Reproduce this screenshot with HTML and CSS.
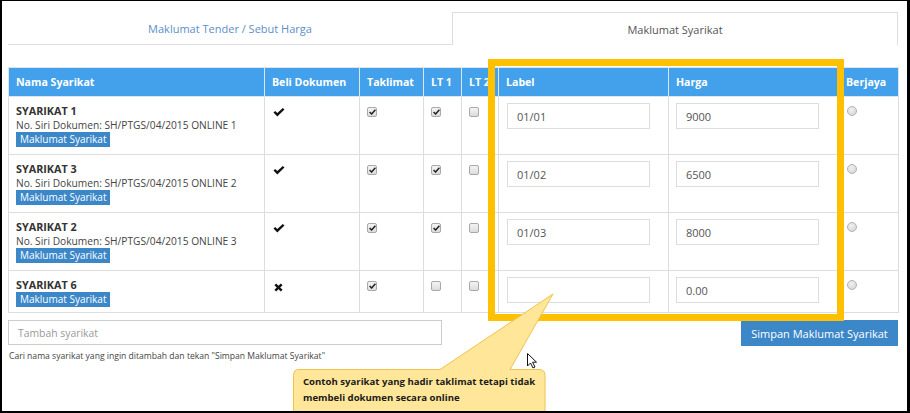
FILE: index.html
```html
<!DOCTYPE html>
<html>
<head>
<meta charset="utf-8">
<link rel="stylesheet" href="styles.css">
</head>
<body>
<div class="frame">
  <div class="tabs">
    <div class="tab">Maklumat Tender / Sebut Harga</div>
    <div class="tab active">Maklumat Syarikat</div>
  </div>
  <table class="grid">
    <colgroup>
      <col class="c-name"><col class="c-beli"><col class="c-tak"><col class="c-lt1"><col class="c-lt2"><col class="c-label"><col class="c-harga"><col class="c-berjaya">
    </colgroup>
    <thead>
      <tr><th>Nama Syarikat</th><th>Beli Dokumen</th><th>Taklimat</th><th>LT 1</th><th>LT 2</th><th>Label</th><th>Harga</th><th>Berjaya</th></tr>
    </thead>
    <tbody>
      <tr class="row">
        <td><div class="name">SYARIKAT 1</div><div class="doc">No. Siri Dokumen: SH/PTGS/04/2015 ONLINE 1</div><div class="badge-line"><span class="badge">Maklumat Syarikat</span></div></td>
        <td><svg class="ok" width="12" height="9" viewBox="0 0 12 9"><path d="M0.5 4.6 L2.2 3 L4.3 5 L9.8 0 L11.5 1.6 L4.3 8.4 Z" fill="#111"/></svg></td>
        <td><span class="cb on"><svg width="7" height="6" viewBox="0 0 7 6"><path d="M0.6 3 L2.6 5 L6.4 0.8" fill="none" stroke="#222" stroke-width="1.5"/></svg></span></td>
        <td><span class="cb on"><svg width="7" height="6" viewBox="0 0 7 6"><path d="M0.6 3 L2.6 5 L6.4 0.8" fill="none" stroke="#222" stroke-width="1.5"/></svg></span></td>
        <td><span class="cb"></span></td>
        <td><input class="field" value="01/01"></td>
        <td><input class="field" value="9000"></td>
        <td><span class="radio"></span></td>
      </tr>
      <tr class="row">
        <td><div class="name">SYARIKAT 3</div><div class="doc">No. Siri Dokumen: SH/PTGS/04/2015 ONLINE 2</div><div class="badge-line"><span class="badge">Maklumat Syarikat</span></div></td>
        <td><svg class="ok" width="12" height="9" viewBox="0 0 12 9"><path d="M0.5 4.6 L2.2 3 L4.3 5 L9.8 0 L11.5 1.6 L4.3 8.4 Z" fill="#111"/></svg></td>
        <td><span class="cb on"><svg width="7" height="6" viewBox="0 0 7 6"><path d="M0.6 3 L2.6 5 L6.4 0.8" fill="none" stroke="#222" stroke-width="1.5"/></svg></span></td>
        <td><span class="cb on"><svg width="7" height="6" viewBox="0 0 7 6"><path d="M0.6 3 L2.6 5 L6.4 0.8" fill="none" stroke="#222" stroke-width="1.5"/></svg></span></td>
        <td><span class="cb"></span></td>
        <td><input class="field" value="01/02"></td>
        <td><input class="field" value="6500"></td>
        <td><span class="radio"></span></td>
      </tr>
      <tr class="row">
        <td><div class="name">SYARIKAT 2</div><div class="doc">No. Siri Dokumen: SH/PTGS/04/2015 ONLINE 3</div><div class="badge-line"><span class="badge">Maklumat Syarikat</span></div></td>
        <td><svg class="ok" width="12" height="9" viewBox="0 0 12 9"><path d="M0.5 4.6 L2.2 3 L4.3 5 L9.8 0 L11.5 1.6 L4.3 8.4 Z" fill="#111"/></svg></td>
        <td><span class="cb on"><svg width="7" height="6" viewBox="0 0 7 6"><path d="M0.6 3 L2.6 5 L6.4 0.8" fill="none" stroke="#222" stroke-width="1.5"/></svg></span></td>
        <td><span class="cb on"><svg width="7" height="6" viewBox="0 0 7 6"><path d="M0.6 3 L2.6 5 L6.4 0.8" fill="none" stroke="#222" stroke-width="1.5"/></svg></span></td>
        <td><span class="cb"></span></td>
        <td><input class="field" value="01/03"></td>
        <td><input class="field" value="8000"></td>
        <td><span class="radio"></span></td>
      </tr>
      <tr class="row short">
        <td><div class="name">SYARIKAT 6</div><div class="badge-line"><span class="badge">Maklumat Syarikat</span></div></td>
        <td><svg class="no" width="9" height="9" viewBox="0 0 9 9"><path d="M1.3 1.3 L7.7 7.7 M7.7 1.3 L1.3 7.7" stroke="#111" stroke-width="2.4"/></svg></td>
        <td><span class="cb on"><svg width="7" height="6" viewBox="0 0 7 6"><path d="M0.6 3 L2.6 5 L6.4 0.8" fill="none" stroke="#222" stroke-width="1.5"/></svg></span></td>
        <td><span class="cb"></span></td>
        <td><span class="cb"></span></td>
        <td><input class="field" value=""></td>
        <td><input class="field" value="0.00"></td>
        <td><span class="radio"></span></td>
      </tr>
    </tbody>
  </table>
  <div class="actions">
    <div class="add-col">
      <input class="add" placeholder="Tambah syarikat">
      <p class="help">Cari nama syarikat yang ingin ditambah dan tekan "Simpan Maklumat Syarikat"</p>
    </div>
    <button class="save">Simpan Maklumat Syarikat</button>
  </div>
  <div class="overlay">
    <div class="highlight"></div>
    <svg class="callout" width="910" height="413" viewBox="0 0 910 413">
      <path d="M299 369.5 L440 369.5 L553 294 L510 369.5 L539 369.5 Q545 369.5 545 375.5 L545 440 L293.5 440 L293.5 375.5 Q293.5 369.5 299 369.5 Z" fill="#ffe699" stroke="#f1c24e" stroke-width="1"/>
      <path d="M527.5 353.5 L527.5 366 L530.5 363 L533 368 L535 367 L532.6 362.2 L536.5 362.2 Z" fill="#fff" stroke="#111" stroke-width="1" stroke-linejoin="round"/>
    </svg>
    <div class="callout-text">Contoh syarikat yang hadir taklimat tetapi tidak membeli dokumen secara online</div>
  </div>
</div>
</body>
</html>
```
FILE: styles.css
```css
* { box-sizing: border-box; }
body { margin: 0; font-family: "Open Sans", "DejaVu Sans", sans-serif; background: #fff; }

.frame {
  position: relative;
  width: 910px;
  height: 413px;
  border-style: solid;
  border-color: #000;
  border-width: 1px 3px 2px 2px;
  padding: 11px 9px 0 6px;
  overflow: hidden;
  background: #fff;
}

.tabs { display: flex; height: 33px; }
.tab {
  flex: 1;
  display: flex;
  align-items: center;
  justify-content: center;
  font-size: 11px;
  color: #5b8fc9;
  border-bottom: 1px solid #ddd;
  padding-top: 1px;
}
.tab.active { color: #555; border: 1px solid #ddd; border-bottom: none; }

.grid {
  margin-top: 22px;
  width: 890px;
  table-layout: fixed;
  border-collapse: collapse;
}
.c-name { width: 256px; }
.c-beli { width: 95px; }
.c-tak { width: 64px; }
.c-lt1 { width: 38px; }
.c-lt2 { width: 37px; }
.c-label { width: 170px; }
.c-harga { width: 170px; }
.c-berjaya { width: 60px; }

.grid th {
  background: #43a1ec;
  color: #fff;
  font-weight: bold;
  font-size: 10.6px;
  text-align: left;
  padding: 0 7px;
  height: 29px;
  border: 1px solid #dde6ee;
  white-space: nowrap;
  overflow: hidden;
}
.grid td {
  border: 1px solid #ddd;
  vertical-align: top;
  padding: 7px 7px 0;
  font-size: 10.2px;
  color: #333;
}
.row { height: 58px; }
.row.short { height: 42px; }

.name { font-weight: bold; font-size: 10.8px; line-height: 14px; color: #333; }
.doc { line-height: 14px; color: #444; white-space: nowrap; }
.badge-line { line-height: 15px; height: 15px; }
.badge {
  display: inline-block;
  background: #3c87c8;
  color: #fff;
  padding: 0 4px;
  line-height: 15px;
  font-size: 10px;
}

.ok { display: block; margin: 4px 0 0 1px; }
.no { display: block; margin: 5px 0 0 2px; }

.cb {
  display: flex;
  align-items: center;
  justify-content: center;
  width: 10px;
  height: 10px;
  margin-top: 3px;
  border: 1px solid #a9a9a9;
  border-radius: 2px;
  background: linear-gradient(#f4f4f4, #dcdcdc);
}

.field {
  display: block;
  width: 143px;
  height: 26px;
  margin-top: -1px;
  border: 1px solid #ddd;
  padding: 0 9px;
  font-family: "Open Sans", sans-serif;
  font-size: 11px;
  color: #555;
  outline: none;
}
.grid td:nth-child(6) .field { margin-left: 1px; }

.radio {
  display: block;
  width: 10px;
  height: 10px;
  margin: 2px 0 0 1px;
  border-radius: 50%;
  border: 1px solid #b3b3b3;
  background: radial-gradient(circle at 40% 35%, #f0f0f0, #d2d2d2);
}

.actions {
  display: flex;
  justify-content: space-between;
  align-items: flex-start;
  margin-top: 7px;
}
.add {
  display: block;
  width: 434px;
  height: 25px;
  border: 1px solid #ccc;
  padding: 0 9px;
  font-family: "Open Sans", sans-serif;
  font-size: 10.4px;
  color: #555;
  outline: none;
}
.add::placeholder { color: #999; }
.help {
  margin: 5px 0 0 1px;
  font-size: 8.6px;
  color: #444;
  line-height: 12px;
}
.save {
  width: 157px;
  height: 26px;
  border: none;
  background: #3c87c8;
  color: #fff;
  font-family: "Open Sans", sans-serif;
  font-size: 11px;
  padding: 0;
}

.overlay {
  position: absolute;
  left: -2px;
  top: -1px;
  width: 910px;
  height: 413px;
  pointer-events: none;
}
.highlight {
  position: absolute;
  left: 488px;
  top: 59px;
  width: 356px;
  height: 262px;
  border: 7px solid #ffc000;
}
.callout { position: absolute; left: 0; top: 0; }
.callout-text {
  position: absolute;
  left: 303px;
  top: 374px;
  width: 240px;
  font-size: 9.6px;
  font-weight: bold;
  line-height: 16px;
  color: #1a1a1a;
}
```
